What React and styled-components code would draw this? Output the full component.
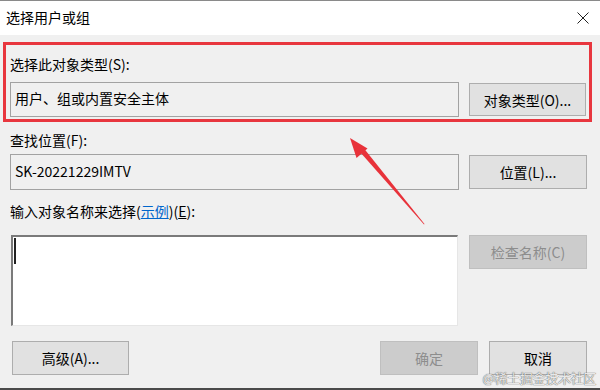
import React from 'react'
import styled, { createGlobalStyle } from 'styled-components'

const GlobalStyle = createGlobalStyle`
    html, body {
        margin: 0;
        padding: 0;
        background: #f0f0f0;
    }
    * {
        box-sizing: border-box;
    }
`

const font = `'Noto Sans CJK SC', 'Noto Sans', sans-serif`

const Window = styled.div`
    position: relative;
    width: 600px;
    height: 390px;
    display: flex;
    flex-direction: column;
    background: #f0f0f0;
    border-top: 1px solid #8a8a8a;
    border-bottom: 2px solid #4a4a4a;
    font-family: ${font};
    font-size: 14px;
    color: #000;
    overflow: hidden;
`

const TitleBar = styled.div`
    height: 34px;
    flex: none;
    display: flex;
    align-items: center;
    justify-content: space-between;
    background: #fff;
    padding: 0 11px 0 6px;
`

const Title = styled.span`
    font-size: 14px;
    line-height: 18px;
    margin-top: -2px;
`

const CloseIcon = () => (
    <svg width="12" height="12" viewBox="0 0 12 12">
        <path d="M0.5 0.5 L11.5 11.5 M11.5 0.5 L0.5 11.5" stroke="#222" strokeWidth="1" fill="none" />
    </svg>
)

const Body = styled.div`
    flex: 1;
    display: flex;
    flex-direction: column;
    padding-top: 7px;
`

const TypeFrame = styled.div`
    margin: 0 8px 0 3px;
    border: 3px solid #e8363e;
    padding: 0 3px 2px 4px;
`

const Section = styled.div`
    padding: 0 13px 0 10px;
`

const Label = styled.div`
    height: 18px;
    line-height: 18px;
    margin-top: ${p => p.top}px;
    margin-bottom: ${p => p.bottom}px;
    white-space: nowrap;
`

const Link = styled.span`
    color: #0066cc;
    text-decoration: underline;
`

const Key = styled.span`
    text-decoration: underline;
`

const Row = styled.div`
    display: flex;
    align-items: ${p => p.align || 'center'};
    justify-content: space-between;
`

const Field = styled.div`
    width: 449px;
    height: ${p => p.h}px;
    border: 1px solid #a2a2a2;
    background: #f0f0f0;
    padding-left: 4px;
    line-height: ${p => p.h - 4}px;
    white-space: nowrap;
`

const TextArea = styled.div`
    width: 447px;
    height: 91px;
    margin-left: 1px;
    background: #fff;
    border-top: 2px solid #7a7a7a;
    border-left: 2px solid #7a7a7a;
    border-right: 1px solid #e6e6e6;
    border-bottom: 1px solid #e6e6e6;
    padding: 1px 0 0 1px;
`

const Caret = styled.span`
    display: block;
    width: 2px;
    height: 26px;
    background: #222;
`

const Button = styled.div`
    width: ${p => p.w || 118}px;
    height: ${p => p.h || 34}px;
    flex: none;
    display: flex;
    align-items: center;
    justify-content: center;
    background: ${p => (p.disabled ? '#cccccc' : '#e1e1e1')};
    border: 1px solid ${p => (p.disabled ? '#bfbfbf' : '#adadad')};
    color: ${p => (p.disabled ? '#8d8d8d' : '#000')};
    white-space: nowrap;
`

const Footer = styled.div`
    display: flex;
    align-items: center;
    justify-content: space-between;
    padding: 0 13px 0 12px;
    margin-top: 15px;
`

const ButtonGroup = styled.div`
    display: flex;
    gap: 11px;
`

const Arrow = styled.svg`
    position: absolute;
    left: 340px;
    top: 130px;
    pointer-events: none;
`

const Watermark = styled.span`
    position: absolute;
    right: 4px;
    bottom: 1px;
    font-size: 13px;
    font-family: 'Noto Sans CJK SC', serif;
    color: #e8e8e8;
    text-shadow: 0 0 1px #6a6a6a, 0 0 1px #6a6a6a;
    letter-spacing: -0.3px;
`

const App = () => (
    <>
        <GlobalStyle />
        <Window>
            <TitleBar>
                <Title>选择用户或组</Title>
                <CloseIcon />
            </TitleBar>
            <Body>
                <TypeFrame>
                    <Label top={10} bottom={9}>选择此对象类型(S):</Label>
                    <Row>
                        <Field h={35}>用户、组或内置安全主体</Field>
                        <Button h={33} w={117}>对象类型(O)...</Button>
                    </Row>
                </TypeFrame>
                <Section>
                    <Label top={9} bottom={5}>查找位置(F):</Label>
                    <Row>
                        <Field h={36}>SK-20221229IMTV</Field>
                        <Button h={34}>位置(L)...</Button>
                    </Row>
                    <Label top={12} bottom={15}>
                        输入对象名称来选择(<Link>示例</Link>)(<Key>E</Key>):
                    </Label>
                    <Row align="flex-start">
                        <TextArea>
                            <Caret />
                        </TextArea>
                        <Button disabled>检查名称(C)</Button>
                    </Row>
                </Section>
                <Footer>
                    <Button w={117}>高级(A)...</Button>
                    <ButtonGroup>
                        <Button w={98} disabled>确定</Button>
                        <Button w={98}>取消</Button>
                    </ButtonGroup>
                </Footer>
            </Body>
            <Arrow width="100" height="100" viewBox="340 130 100 100">
                <polygon points="350,137 367.5,147.5 356.5,157" fill="#e8323a" />
                <polygon points="360,151 364,147.5 424.5,223 424,223.4" fill="#e8323a" />
            </Arrow>
            <Watermark>@稀土掘金技术社区</Watermark>
        </Window>
    </>
)

export default App
